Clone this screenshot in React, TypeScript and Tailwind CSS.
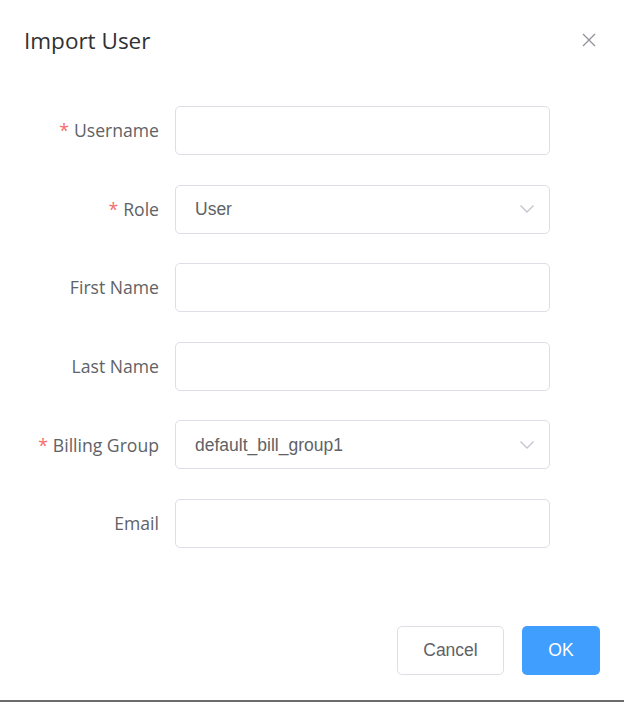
import React from "react";

const labelFont = { fontFamily: '"Open Sans", "Noto Sans", sans-serif' };

function Chevron() {
  return (
    <svg width="16" height="10" viewBox="0 0 16 10" fill="none" className="shrink-0">
      <path d="M1.5 1.5 L8 8 L14.5 1.5" stroke="#C0C4CC" strokeWidth="1.3" />
    </svg>
  );
}

function Row({
  label,
  required,
  value,
  select,
}: {
  label: string;
  required?: boolean;
  value?: string;
  select?: boolean;
}) {
  return (
    <div className="flex items-center h-[49px]">
      <div
        className="w-[175px] pr-[16px] text-right text-[17.6px] text-[#606266] shrink-0"
        style={labelFont}
      >
        {required && <span className="text-[#F56C6C] mr-[5px]">*</span>}
        {label}
      </div>
      <div className="w-[375px] h-[49px] border border-[#DCDFE6] rounded-[5px] flex items-center justify-between pl-[19px] pr-[14px] bg-white">
        <span
          className="text-[17.5px] text-[#606266]"
          style={{ fontFamily: '"Liberation Sans", Arial, sans-serif' }}
        >
          {value}
        </span>
        {select && <Chevron />}
      </div>
    </div>
  );
}

export default function App() {
  return (
    <div className="w-[624px] h-[702px] bg-white flex flex-col relative overflow-hidden">
      <div className="h-[106px] pt-[24px] pl-[24px] pr-[24px] flex items-start justify-between shrink-0">
        <div
          className="text-[22.5px] leading-[34px] text-[#303133]"
          style={labelFont}
        >
          Import User
        </div>
        <svg width="20" height="20" viewBox="0 0 20 20" className="mt-[6px] mr-[1px]">
          <path d="M4 4 L16 16 M16 4 L4 16" stroke="#909399" strokeWidth="1.3" />
        </svg>
      </div>
      <div className="flex flex-col gap-[29.6px]">
        <Row label="Username" required />
        <Row label="Role" required value="User" select />
        <Row label="First Name" />
        <Row label="Last Name" />
        <Row label="Billing Group" required value="default_bill_group1" select />
        <Row label="Email" />
      </div>
      <div className="flex justify-end gap-[18px] pr-[24px] mt-[78px]">
        <button
          className="w-[107px] h-[49px] border border-[#DCDFE6] rounded-[5px] text-[17.5px] text-[#606266] bg-white"
          style={{ fontFamily: '"Liberation Sans", Arial, sans-serif' }}
        >
          Cancel
        </button>
        <button
          className="w-[78px] h-[49px] rounded-[5px] text-[17.5px] text-white bg-[#409EFF]"
          style={{ fontFamily: '"Liberation Sans", Arial, sans-serif' }}
        >
          OK
        </button>
      </div>
      <div className="absolute left-0 right-0 bottom-0 h-[2px] bg-[#6b6b6b]" />
    </div>
  );
}
